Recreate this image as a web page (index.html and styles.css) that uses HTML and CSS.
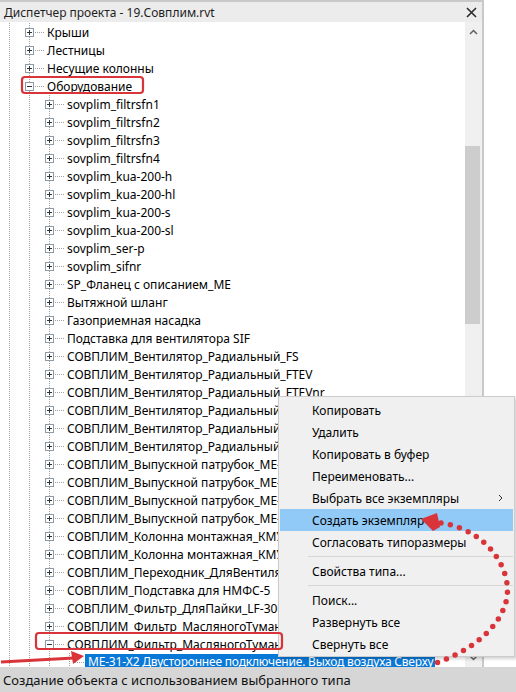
FILE: index.html
```html
<!DOCTYPE html>
<html>
<head>
  <meta charset="utf-8">
  <title>Диспетчер проекта</title>
  <link rel="stylesheet" href="styles.css">
</head>
<body>
  <div class="window">
    <div class="panel">
      <div class="titlebar">
        <span class="title">Диспетчер проекта - 19.Совплим.rvt</span>
        <svg class="close" width="11" height="11" viewBox="0 0 11 11"><path d="M1 1L10 10M10 1L1 10" stroke="#2b2b2b" stroke-width="1.6"/></svg>
      </div>
      <div class="body">
        <div class="tree">
          <div class="row"><span class="guide"></span><span class="twisty"><span class="box plus"></span></span><span class="dash"></span><span class="label">Крыши</span></div>
          <div class="row"><span class="guide"></span><span class="twisty"><span class="box plus"></span></span><span class="dash"></span><span class="label">Лестницы</span></div>
          <div class="row"><span class="guide"></span><span class="twisty"><span class="box plus"></span></span><span class="dash"></span><span class="label">Несущие колонны</span></div>
          <div class="row"><span class="guide"></span><span class="twisty"><span class="box"></span></span><span class="dash"></span><span class="label">Оборудование</span></div>
          <div class="row"><span class="guide"></span><span class="guide"></span><span class="twisty"><span class="box plus"></span></span><span class="dash"></span><span class="label">sovplim_filtrsfn1</span></div>
          <div class="row"><span class="guide"></span><span class="guide"></span><span class="twisty"><span class="box plus"></span></span><span class="dash"></span><span class="label">sovplim_filtrsfn2</span></div>
          <div class="row"><span class="guide"></span><span class="guide"></span><span class="twisty"><span class="box plus"></span></span><span class="dash"></span><span class="label">sovplim_filtrsfn3</span></div>
          <div class="row"><span class="guide"></span><span class="guide"></span><span class="twisty"><span class="box plus"></span></span><span class="dash"></span><span class="label">sovplim_filtrsfn4</span></div>
          <div class="row"><span class="guide"></span><span class="guide"></span><span class="twisty"><span class="box plus"></span></span><span class="dash"></span><span class="label">sovplim_kua-200-h</span></div>
          <div class="row"><span class="guide"></span><span class="guide"></span><span class="twisty"><span class="box plus"></span></span><span class="dash"></span><span class="label">sovplim_kua-200-hl</span></div>
          <div class="row"><span class="guide"></span><span class="guide"></span><span class="twisty"><span class="box plus"></span></span><span class="dash"></span><span class="label">sovplim_kua-200-s</span></div>
          <div class="row"><span class="guide"></span><span class="guide"></span><span class="twisty"><span class="box plus"></span></span><span class="dash"></span><span class="label">sovplim_kua-200-sl</span></div>
          <div class="row"><span class="guide"></span><span class="guide"></span><span class="twisty"><span class="box plus"></span></span><span class="dash"></span><span class="label">sovplim_ser-p</span></div>
          <div class="row"><span class="guide"></span><span class="guide"></span><span class="twisty"><span class="box plus"></span></span><span class="dash"></span><span class="label">sovplim_sifnr</span></div>
          <div class="row"><span class="guide"></span><span class="guide"></span><span class="twisty"><span class="box plus"></span></span><span class="dash"></span><span class="label">SP_Фланец с описанием_ME</span></div>
          <div class="row"><span class="guide"></span><span class="guide"></span><span class="twisty"><span class="box plus"></span></span><span class="dash"></span><span class="label">Вытяжной шланг</span></div>
          <div class="row"><span class="guide"></span><span class="guide"></span><span class="twisty"><span class="box plus"></span></span><span class="dash"></span><span class="label">Газоприемная насадка</span></div>
          <div class="row"><span class="guide"></span><span class="guide"></span><span class="twisty"><span class="box plus"></span></span><span class="dash"></span><span class="label">Подставка для вентилятора SIF</span></div>
          <div class="row"><span class="guide"></span><span class="guide"></span><span class="twisty"><span class="box plus"></span></span><span class="dash"></span><span class="label">СОВПЛИМ_Вентилятор_Радиальный_FS</span></div>
          <div class="row"><span class="guide"></span><span class="guide"></span><span class="twisty"><span class="box plus"></span></span><span class="dash"></span><span class="label">СОВПЛИМ_Вентилятор_Радиальный_FTEV</span></div>
          <div class="row"><span class="guide"></span><span class="guide"></span><span class="twisty"><span class="box plus"></span></span><span class="dash"></span><span class="label">СОВПЛИМ_Вентилятор_Радиальный_FTEVnr</span></div>
          <div class="row"><span class="guide"></span><span class="guide"></span><span class="twisty"><span class="box plus"></span></span><span class="dash"></span><span class="label">СОВПЛИМ_Вентилятор_Радиальный_FSP</span></div>
          <div class="row"><span class="guide"></span><span class="guide"></span><span class="twisty"><span class="box plus"></span></span><span class="dash"></span><span class="label">СОВПЛИМ_Вентилятор_Радиальный_FTS</span></div>
          <div class="row"><span class="guide"></span><span class="guide"></span><span class="twisty"><span class="box plus"></span></span><span class="dash"></span><span class="label">СОВПЛИМ_Вентилятор_Радиальный_SF</span></div>
          <div class="row"><span class="guide"></span><span class="guide"></span><span class="twisty"><span class="box plus"></span></span><span class="dash"></span><span class="label">СОВПЛИМ_Выпускной патрубок_ME-сп-1</span></div>
          <div class="row"><span class="guide"></span><span class="guide"></span><span class="twisty"><span class="box plus"></span></span><span class="dash"></span><span class="label">СОВПЛИМ_Выпускной патрубок_ME-сп-2</span></div>
          <div class="row"><span class="guide"></span><span class="guide"></span><span class="twisty"><span class="box plus"></span></span><span class="dash"></span><span class="label">СОВПЛИМ_Выпускной патрубок_ME-сп-3</span></div>
          <div class="row"><span class="guide"></span><span class="guide"></span><span class="twisty"><span class="box plus"></span></span><span class="dash"></span><span class="label">СОВПЛИМ_Выпускной патрубок_ME-сп-4</span></div>
          <div class="row"><span class="guide"></span><span class="guide"></span><span class="twisty"><span class="box plus"></span></span><span class="dash"></span><span class="label">СОВПЛИМ_Колонна монтажная_КМУ</span></div>
          <div class="row"><span class="guide"></span><span class="guide"></span><span class="twisty"><span class="box plus"></span></span><span class="dash"></span><span class="label">СОВПЛИМ_Колонна монтажная_КМУ_2</span></div>
          <div class="row"><span class="guide"></span><span class="guide"></span><span class="twisty"><span class="box plus"></span></span><span class="dash"></span><span class="label">СОВПЛИМ_Переходник_ДляВентилятора</span></div>
          <div class="row"><span class="guide"></span><span class="guide"></span><span class="twisty"><span class="box plus"></span></span><span class="dash"></span><span class="label">СОВПЛИМ_Подставка для НМФС-5</span></div>
          <div class="row"><span class="guide"></span><span class="guide"></span><span class="twisty"><span class="box plus"></span></span><span class="dash"></span><span class="label">СОВПЛИМ_Фильтр_ДляПайки_LF-300</span></div>
          <div class="row"><span class="guide"></span><span class="guide"></span><span class="twisty"><span class="box plus"></span></span><span class="dash"></span><span class="label">СОВПЛИМ_Фильтр_МасляногоТумана</span></div>
          <div class="row"><span class="guide"></span><span class="guide"></span><span class="twisty"><span class="box"></span></span><span class="dash"></span><span class="label">СОВПЛИМ_Фильтр_МасляногоТумана</span></div>
          <div class="row"><span class="guide"></span><span class="guide"></span><span class="guide"></span><span class="twisty leaf"></span><span class="dash"></span><span class="label selected">ME-31-X2 Двустороннее подключение. Выход воздуха Сверху</span></div>
        </div>
        <div class="scrollbar">
          <svg class="arrow" width="9" height="6" viewBox="0 0 9 6"><path d="M1 5L4.5 1.5L8 5" fill="none" stroke="#606060" stroke-width="1.5"/></svg>
          <div class="thumb"></div>
          <svg class="arrow down" width="9" height="6" viewBox="0 0 9 6"><path d="M1 1L4.5 4.5L8 1" fill="none" stroke="#606060" stroke-width="1.5"/></svg>
        </div>
      </div>
    </div>
    <div class="status">Создание объекта с использованием выбранного типа</div>

    <!-- context menu -->
    <div class="menu">
      <div class="item">Копировать</div>
      <div class="item">Удалить</div>
      <div class="item">Копировать в буфер</div>
      <div class="item">Переименовать...</div>
      <div class="item">Выбрать все экземпляры
        <svg class="sub" width="5" height="8" viewBox="0 0 5 8"><path d="M1 1L4 4L1 7" fill="none" stroke="#333" stroke-width="1"/></svg>
      </div>
      <div class="item hover">Создать экземпляр</div>
      <div class="item">Согласовать типоразмеры</div>
      <div class="sep"></div>
      <div class="item">Свойства типа...</div>
      <div class="sep"></div>
      <div class="item">Поиск...</div>
      <div class="item">Развернуть все</div>
      <div class="item">Свернуть все</div>
    </div>

    <!-- red annotations drawn over the screenshot -->
    <svg class="annot" width="516" height="692" viewBox="0 0 516 692">
      <rect x="22" y="77" width="121" height="16" rx="3" fill="none" stroke="#d8343a" stroke-width="2.2"/>
      <rect x="36" y="633" width="246" height="16" rx="3" fill="none" stroke="#d8343a" stroke-width="2.2"/>
      <path d="M1 662 L74 658" stroke="#d8343a" stroke-width="3" fill="none"/>
      <polygon points="84,656 71,651 73,664" fill="#d8343a"/>
      <path d="M441 523 C 490 530, 516 575, 505 605 C 495 635, 462 655, 430 665" fill="none" stroke="#d8343a" stroke-width="5.5" stroke-linecap="round" stroke-dasharray="0 9.5"/>
      <polygon points="421,519 437,513 440,527 433,531" fill="#d8343a"/>
    </svg>
  </div>
</body>
</html>
```

FILE: styles.css
```css
body {
  margin: 0;
  font-family: "Noto Sans", sans-serif;
  font-size: 12px;
  color: #000;
  background-color: #fff;
}
.window {
  position: relative;
  width: 516px;
  height: 692px;
  display: flex;
  flex-direction: column;
  overflow: hidden;
}
.panel {
  width: 482px;
  flex: 1;
  min-height: 0;
  display: flex;
  flex-direction: column;
  border-top: 2px solid #c9c9c9;
  border-right: 2px solid #c9c9c9;
}
.titlebar {
  height: 20px;
  background-color: #ececec;
  display: flex;
  align-items: center;
  justify-content: space-between;
  padding: 0 5px 0 4px;
  color: #1e1e1e;
}
.body {
  flex: 1;
  min-height: 0;
  display: flex;
}
.tree {
  flex: 1;
  overflow: hidden;
  padding-top: 1px;
}
.row {
  height: 18px;
  display: flex;
  align-items: center;
  white-space: nowrap;
}
.guide {
  width: 20px;
  height: 18px;
  flex: none;
  background: linear-gradient(#a0a0a0 50%, transparent 0) 9px 0 / 1px 2px repeat-y;
}
.twisty {
  width: 9px;
  height: 18px;
  margin-left: 5px;
  flex: none;
  display: flex;
  align-items: center;
  background: linear-gradient(#a0a0a0 50%, transparent 0) 4px 0 / 1px 2px repeat-y;
}
.box {
  position: relative;
  width: 9px;
  height: 9px;
  box-sizing: border-box;
  border: 1px solid #8e9aa6;
  background-color: #fff;
}
.box::before {
  content: "";
  position: absolute;
  left: 1px;
  top: 3px;
  width: 5px;
  height: 1px;
  background-color: #333;
}
.box.plus::after {
  content: "";
  position: absolute;
  left: 3px;
  top: 1px;
  width: 1px;
  height: 5px;
  background-color: #333;
}
.dash {
  width: 10px;
  height: 1px;
  margin-left: 1px;
  flex: none;
  background: linear-gradient(90deg, #a0a0a0 50%, transparent 0) 0 0 / 2px 1px repeat-x;
}
.label {
  margin-left: 2px;
}
.label.selected {
  margin-left: 0;
  padding: 0 2px 0 3px;
  line-height: 16px;
  letter-spacing: -0.2px;
  background-color: #0a78d7;
  color: #fff;
}
.scrollbar {
  width: 17px;
  flex: none;
  background-color: #f0f0f0;
  display: flex;
  flex-direction: column;
  align-items: center;
}
.scrollbar .arrow {
  margin-top: 7px;
}
.scrollbar .arrow.down {
  margin-top: auto;
  margin-bottom: 6px;
}
.thumb {
  width: 15px;
  height: 178px;
  margin-top: 111px;
  align-self: flex-start;
  background-color: #cdcdcd;
}
.status {
  height: 25px;
  flex: none;
  display: flex;
  align-items: center;
  padding-left: 3px;
  background-color: #d6d6d6;
  font-size: 13px;
  color: #111;
}
.menu {
  position: absolute;
  left: 278px;
  top: 396px;
  width: 233px;
  padding: 2px 1px 1px;
  background-color: #f0f0f0;
  border: 1px solid #cccccc;
  box-shadow: 2px 2px 3px rgba(0,0,0,0.18);
}
.item {
  height: 22px;
  display: flex;
  align-items: center;
  padding-left: 32px;
  padding-right: 10px;
  color: #000;
}
.item.hover {
  background-color: #91c9f7;
}
.item .sub {
  margin-left: auto;
}
.sep {
  height: 1px;
  margin: 3px 0 3px 28px;
  background-color: #d7d7d7;
}
.annot {
  position: absolute;
  left: 0;
  top: 0;
  pointer-events: none;
}
```
